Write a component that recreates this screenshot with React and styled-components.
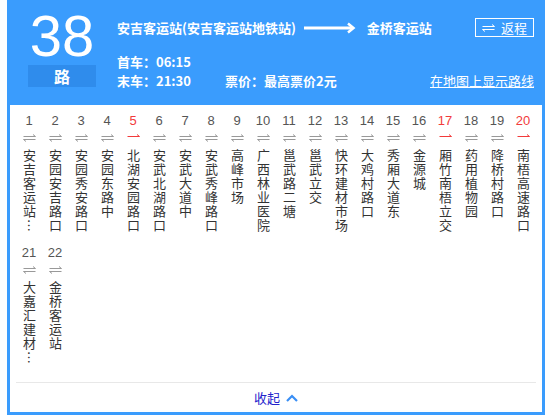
import React from 'react';
import styled, { createGlobalStyle } from 'styled-components';

const GlobalStyle = createGlobalStyle`
  body {
    margin: 0;
    background: #fff;
    font-family: "Liberation Sans", "Noto Sans CJK SC", sans-serif;
  }
`;

const BLUE = '#3a9cfd';
const RED = '#f23b3b';

const Panel = styled.div`
  margin-left: 7px;
  width: 532px;
  border: 3px solid ${BLUE};
  border-top: 0;
  background: #fff;
`;

const Header = styled.div`
  height: 105px;
  box-sizing: border-box;
  background: ${BLUE};
  display: flex;
  align-items: flex-start;
  padding: 7px 8px 0 18px;
  color: #fff;
`;

const NumberBlock = styled.div`
  width: 68px;
  display: flex;
  flex-direction: column;
  align-items: center;
`;

const BigNum = styled.div`
  font-family: "Liberation Sans", sans-serif;
  font-size: 58px;
  line-height: 58px;
  height: 58px;
`;

const RoadTag = styled.div`
  width: 68px;
  height: 22px;
  line-height: 22px;
  text-align: center;
  background: #2f8cec;
  font-family: "Noto Sans CJK SC", sans-serif;
  font-size: 16px;
  font-weight: 700;
`;

const Info = styled.div`
  flex: 1;
  margin-left: 21px;
  padding-top: 10px;
  font-family: "Noto Sans CJK SC", sans-serif;
  font-size: 13px;
`;

const TitleRow = styled.div`
  display: flex;
  align-items: center;
  height: 20px;
  margin-bottom: 15px;
`;

const Station = styled.span`
  font-weight: 700;
  white-space: nowrap;
`;

const LongArrow = styled.svg`
  margin: 2px 11px 0 8px;
  flex: none;
`;

const Spacer = styled.div`
  flex: 1;
`;

const ReturnButton = styled.div`
  display: flex;
  align-items: center;
  gap: 6px;
  height: 19px;
  margin-top: 1px;
  padding: 0 6px;
  border: 1px solid #fff;
  box-sizing: border-box;
  line-height: 17px;
`;

const TimeRow = styled.div`
  display: flex;
  align-items: center;
  height: 19px;
  line-height: 19px;
`;

const TimeText = styled.span`
  font-weight: 700;
  width: 108px;
  white-space: nowrap;
`;

const MapLink = styled.a`
  color: #fff;
  text-decoration: underline;
  cursor: pointer;
`;

const Stops = styled.div`
  display: grid;
  grid-template-columns: repeat(20, 26px);
  grid-auto-rows: 132px;
  padding: 8px 6px 0;
`;

const Stop = styled.div`
  display: flex;
  flex-direction: column;
  align-items: center;
`;

const StopNum = styled.div`
  height: 16px;
  line-height: 16px;
  font-size: 13px;
  color: ${p => (p.$hot ? RED : '#555')};
`;

const StopArrow = styled.svg`
  margin-top: 5px;
  display: block;
`;

const StopName = styled.div`
  margin-top: 7px;
  writing-mode: vertical-rl;
  font-family: "Noto Sans CJK SC", sans-serif;
  font-size: 13px;
  line-height: 16px;
  letter-spacing: 1px;
  color: #333;
`;

const Divider = styled.div`
  margin: 5px 6px 0;
  height: 1px;
  background: #e8e8e8;
`;

const Footer = styled.div`
  height: 29px;
  display: flex;
  align-items: center;
  justify-content: center;
  gap: 6px;
  font-family: "Noto Sans CJK SC", sans-serif;
  font-size: 13px;
  color: #2424cc;
  cursor: pointer;
`;

const stops = [
  '安吉客运站(安吉客运站地铁站)', '安园安吉路口', '安园秀安路口', '安园东路中', '北湖安园路口',
  '安武北湖路口', '安武大道中', '安武秀峰路口', '高峰市场', '广西林业医院',
  '邕武路二塘', '邕武立交', '快环建材市场', '大鸡村路口', '秀厢大道东',
  '金源城', '厢竹南梧立交', '药用植物园', '降桥村路口', '南梧高速路口',
  '大嘉汇建材市场', '金桥客运站',
];
const oneWay = [5, 17, 20];

const Harpoons = ({ color }) => (
  <svg width="13" height="8" viewBox="0 0 13 8">
    <path d="M0.5 2.5H12.5L10 0.5" fill="none" stroke={color} strokeWidth="1" />
    <path d="M12.5 5.5H0.5L3 7.5" fill="none" stroke={color} strokeWidth="1" />
  </svg>
);

const StopIcon = ({ hot }) => (
  <StopArrow width="13" height="8" viewBox="0 0 13 8">
    {hot ? (
      <path d="M0.5 2.5H12.5L10 0.5" fill="none" stroke={RED} strokeWidth="1" />
    ) : (
      <>
        <path d="M0.5 2.5H12.5L10 0.5" fill="none" stroke="#999" strokeWidth="1" />
        <path d="M12.5 5.5H0.5L3 7.5" fill="none" stroke="#999" strokeWidth="1" />
      </>
    )}
  </StopArrow>
);

// long names keep five characters and a vertical ellipsis
const shortName = (name) => {
  const chars = Array.from(name);
  return chars.length > 6 ? chars.slice(0, 5).join('') + '…' : name;
};

const App = () => (
  <>
    <GlobalStyle />
    <Panel>
      <Header>
        <NumberBlock>
          <BigNum>38</BigNum>
          <RoadTag>路</RoadTag>
        </NumberBlock>
        <Info>
          <TitleRow>
            <Station>安吉客运站(安吉客运站地铁站)</Station>
            <LongArrow width="52" height="12" viewBox="0 0 52 12">
              <path d="M0 6H49" stroke="#fff" strokeWidth="3" />
              <path d="M44 1.5L49.5 6L44 10.5" fill="none" stroke="#fff" strokeWidth="2.5" />
            </LongArrow>
            <Station>金桥客运站</Station>
            <Spacer />
            <ReturnButton>
              <Harpoons color="#fff" />
              返程
            </ReturnButton>
          </TitleRow>
          <TimeRow>
            <TimeText>首车：06:15</TimeText>
          </TimeRow>
          <TimeRow>
            <TimeText>末车：21:30</TimeText>
            <TimeText>票价：最高票价2元</TimeText>
            <Spacer />
            <MapLink>在地图上显示路线</MapLink>
          </TimeRow>
        </Info>
      </Header>

      <Stops>
        {stops.map((name, i) => {
          const n = i + 1;
          const hot = oneWay.includes(n);
          return (
            <Stop key={n}>
              <StopNum $hot={hot}>{n}</StopNum>
              <StopIcon hot={hot} />
              <StopName>{shortName(name)}</StopName>
            </Stop>
          );
        })}
      </Stops>

      <Divider />
      <Footer>
        收起
        <svg width="12" height="8" viewBox="0 0 12 8">
          <path d="M1 7L6 2L11 7" fill="none" stroke="#3a8ff5" strokeWidth="2.2" />
        </svg>
      </Footer>
    </Panel>
  </>
);

export default App;
